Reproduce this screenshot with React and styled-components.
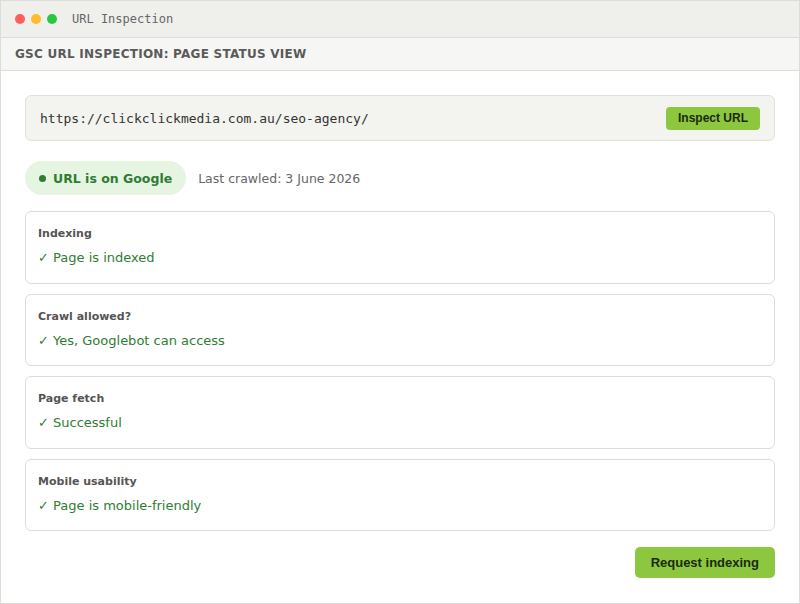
import React from 'react';
import styled, { createGlobalStyle } from 'styled-components';

const checks = [
  { label: 'Indexing', value: 'Page is indexed' },
  { label: 'Crawl allowed?', value: 'Yes, Googlebot can access' },
  { label: 'Page fetch', value: 'Successful' },
  { label: 'Mobile usability', value: 'Page is mobile-friendly' },
];

const GlobalStyle = createGlobalStyle`
  html, body {
    margin: 0;
    padding: 0;
    background: #fff;
  }
  * { box-sizing: border-box; }
`;

const Window = styled.div`
  width: 800px;
  height: 604px;
  border: 1px solid #dcdcd8;
  background: #fff;
  font-family: "DejaVu Sans", sans-serif;
  display: flex;
  flex-direction: column;
`;

const TitleBar = styled.div`
  height: 37px;
  background: #efefeb;
  border-bottom: 1px solid #dcdcd8;
  display: flex;
  align-items: center;
  padding-left: 14px;
  gap: 6px;
`;

const Dot = styled.span`
  width: 10px;
  height: 10px;
  border-radius: 50%;
  background: ${p => p.color};
`;

const WindowTitle = styled.span`
  margin-left: 9px;
  font-family: "DejaVu Sans Mono", monospace;
  font-size: 12px;
  color: #666;
`;

const Header = styled.div`
  height: 33px;
  background: #f6f6f4;
  border-bottom: 1px solid #dcdcd8;
  display: flex;
  align-items: center;
  padding-left: 14px;
  font-size: 12px;
  font-weight: bold;
  letter-spacing: 0.25px;
  color: #5a5a5a;
`;

const Content = styled.div`
  padding: 24px 24px 0 24px;
  display: flex;
  flex-direction: column;
`;

const UrlBox = styled.div`
  height: 46px;
  background: #f3f3ef;
  border: 1px solid #e2e2dc;
  border-radius: 6px;
  display: flex;
  align-items: center;
  justify-content: space-between;
  padding: 0 14px 0 14px;
`;

const UrlText = styled.span`
  font-family: "DejaVu Sans Mono", monospace;
  font-size: 13px;
  color: #333;
`;

const Button = styled.button`
  border: none;
  background: #8dc63f;
  color: #1b2a0a;
  font-family: "Liberation Sans", Arial, sans-serif;
  font-weight: bold;
  font-size: ${p => (p.large ? '13px' : '12px')};
  height: ${p => (p.large ? '31px' : '23px')};
  padding: ${p => (p.large ? '0 16px' : '0 12px')};
  border-radius: ${p => (p.large ? '5px' : '4px')};
  cursor: pointer;
`;

const StatusRow = styled.div`
  margin-top: 20px;
  display: flex;
  align-items: center;
  gap: 12px;
`;

const Pill = styled.div`
  height: 34px;
  padding: 0 14px;
  border-radius: 17px;
  background: #e6f4e2;
  color: #2e7d32;
  font-weight: bold;
  font-size: 12.5px;
  display: flex;
  align-items: center;
  gap: 7px;
`;

const PillDot = styled.span`
  width: 7px;
  height: 7px;
  border-radius: 50%;
  background: #2e7d32;
`;

const Crawled = styled.span`
  font-size: 12.5px;
  color: #666;
`;

const Cards = styled.div`
  margin-top: 16px;
  display: flex;
  flex-direction: column;
  gap: 10px;
`;

const Card = styled.div`
  height: 72.6px;
  border: 1px solid #dcdcd8;
  border-radius: 6px;
  padding: 15px 12px 0 12px;
  display: flex;
  flex-direction: column;
  gap: 10px;
`;

const CardLabel = styled.div`
  font-size: 11px;
  font-weight: bold;
  color: #555;
`;

const CardValue = styled.div`
  font-size: 13px;
  color: #2e7d32;
`;

const Footer = styled.div`
  margin-top: 16px;
  display: flex;
  justify-content: flex-end;
`;

export default function App() {
  return (
    <>
      <GlobalStyle />
      <Window>
        <TitleBar>
          <Dot color="#ff5f57" />
          <Dot color="#febc2e" />
          <Dot color="#28c840" />
          <WindowTitle>URL Inspection</WindowTitle>
        </TitleBar>
        <Header>GSC URL INSPECTION: PAGE STATUS VIEW</Header>
        <Content>
          <UrlBox>
            <UrlText>https://clickclickmedia.com.au/seo-agency/</UrlText>
            <Button>Inspect URL</Button>
          </UrlBox>
          <StatusRow>
            <Pill>
              <PillDot />
              URL is on Google
            </Pill>
            <Crawled>Last crawled: 3 June 2026</Crawled>
          </StatusRow>
          <Cards>
            {checks.map(c => (
              <Card key={c.label}>
                <CardLabel>{c.label}</CardLabel>
                <CardValue>✓ {c.value}</CardValue>
              </Card>
            ))}
          </Cards>
          <Footer>
            <Button large>Request indexing</Button>
          </Footer>
        </Content>
      </Window>
    </>
  );
}
